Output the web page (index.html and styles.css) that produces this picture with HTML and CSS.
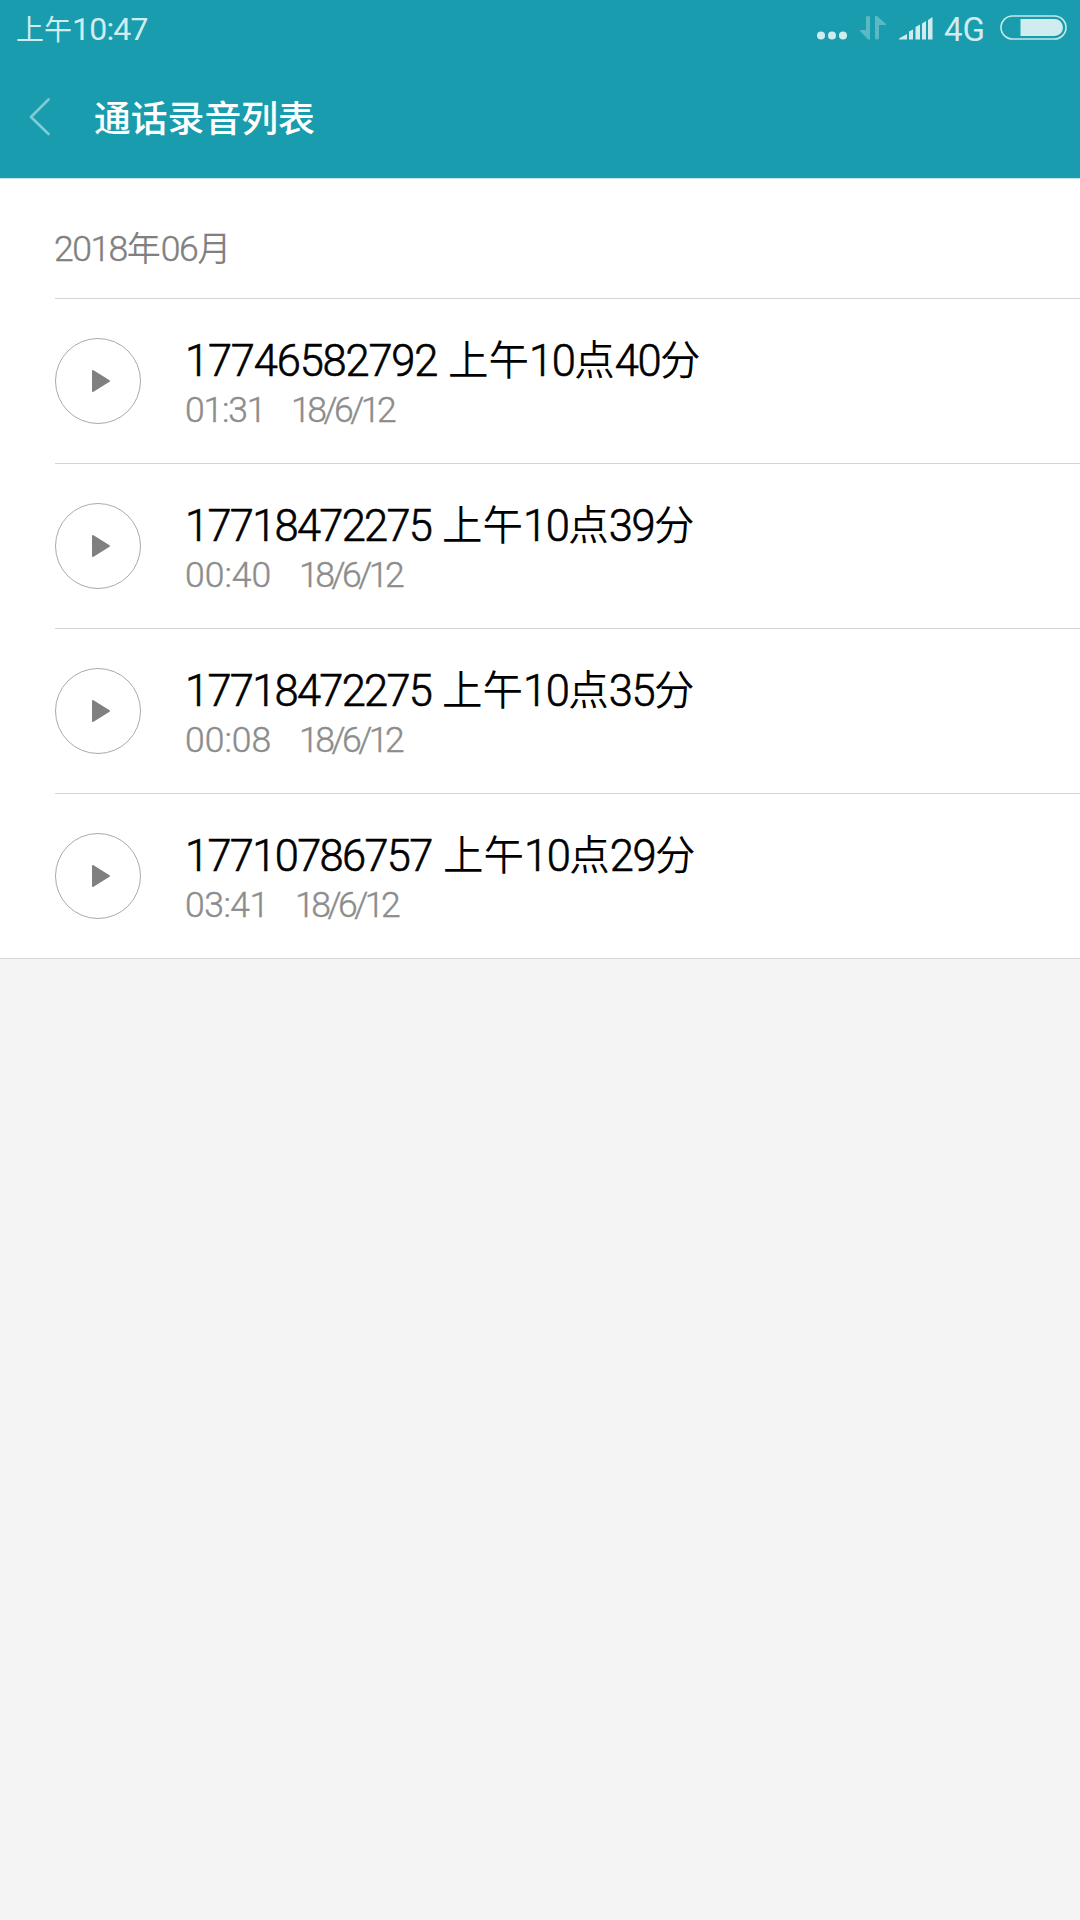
FILE: index.html
```html
<!DOCTYPE html>
<html lang="zh-CN">
<head>
<meta charset="utf-8">
<title>通话录音列表</title>
<link rel="stylesheet" href="styles.css">
</head>
<body>
<header class="header">
  <div class="status">
    <div class="clock"><span class="han">上午</span><span class="num">10:47</span></div>
    <div class="indicators">
      <svg width="128" height="30" viewBox="0 0 128 30" fill="#d0ecef">
        <circle cx="5" cy="21.5" r="4"/><circle cx="16" cy="21.5" r="4"/><circle cx="27" cy="21.5" r="4"/>
        <g fill="#5bb9c3"><path d="M50 3Q50 2 52 2T54 3V25.500H52L44 17V16H50z"/><path d="M59 2H61L70 10V11H63V24Q63 25.500 61 25.500T59 24z"/></g>
        <path d="M83 25.500V24.500L91 20V25.500zM93 25.500V17.500L97 15.500V25.500zM99.500 25.500V13L104 10.500V25.500zM106 25.500V9.500L110 7V25.500zM112 25.500V6L116.500 3V25.500z" stroke="none"/>
      </svg>
      <span class="network">4G</span>
      <svg width="67" height="26" viewBox="0 0 67 26">
        <rect x="1" y="1" width="65" height="23" rx="11.500" fill="none" stroke="#c5e8eb" stroke-width="1.600"/>
        <path d="M20.500 4H54.500A8.500 8.500 0 0 1 54.500 21H20.500z" fill="#d0ecef"/>
      </svg>
    </div>
  </div>
  <div class="toolbar">
    <svg class="back" width="22" height="38" viewBox="0 0 22 38"><path d="M19.500 1.500L2 19L19.500 36" fill="none" stroke="#7fccd3" stroke-width="2.600" stroke-linecap="round" stroke-linejoin="round"/></svg>
    <h1 class="heading">通话录音列表</h1>
  </div>
</header>
<main class="list">
  <h2 class="month"><span class="num">2018</span><span class="han">年</span><span class="num">06</span><span class="han">月</span></h2>
  <article class="record">
    <span class="play"><svg width="20" height="24" viewBox="0 0 20 24"><path d="M2 2L18 12L2 22z" fill="#808080" stroke="#808080" stroke-width="2" stroke-linejoin="round"/></svg></span>
    <div class="info">
      <div class="name"><span class="phone wide">17746582792</span><span class="han">上午</span><span class="num">10</span><span class="han">点</span><span class="num">40</span><span class="han">分</span></div>
      <div class="meta"><span class="length short">01:31</span><span class="date">18/6/12</span></div>
    </div>
  </article>
  <article class="record">
    <span class="play"><svg width="20" height="24" viewBox="0 0 20 24"><path d="M2 2L18 12L2 22z" fill="#808080" stroke="#808080" stroke-width="2" stroke-linejoin="round"/></svg></span>
    <div class="info">
      <div class="name"><span class="phone">17718472275</span><span class="han">上午</span><span class="num">10</span><span class="han">点</span><span class="num">39</span><span class="han">分</span></div>
      <div class="meta"><span class="length">00:40</span><span class="date">18/6/12</span></div>
    </div>
  </article>
  <article class="record">
    <span class="play"><svg width="20" height="24" viewBox="0 0 20 24"><path d="M2 2L18 12L2 22z" fill="#808080" stroke="#808080" stroke-width="2" stroke-linejoin="round"/></svg></span>
    <div class="info">
      <div class="name"><span class="phone">17718472275</span><span class="han">上午</span><span class="num">10</span><span class="han">点</span><span class="num">35</span><span class="han">分</span></div>
      <div class="meta"><span class="length">00:08</span><span class="date">18/6/12</span></div>
    </div>
  </article>
  <article class="record">
    <span class="play"><svg width="20" height="24" viewBox="0 0 20 24"><path d="M2 2L18 12L2 22z" fill="#808080" stroke="#808080" stroke-width="2" stroke-linejoin="round"/></svg></span>
    <div class="info">
      <div class="name"><span class="phone last">17710786757</span><span class="han">上午</span><span class="num">10</span><span class="han">点</span><span class="num">29</span><span class="han">分</span></div>
      <div class="meta"><span class="length medium">03:41</span><span class="date">18/6/12</span></div>
    </div>
  </article>
</main>
</body>
</html>
```
FILE: styles.css
```css
* { box-sizing: border-box; }
body {
  margin: 0;
  min-height: 1920px;
  background: #f4f4f4;
  font-family: Roboto, "Noto Sans CJK SC", sans-serif;
}
svg { display: block; flex: none; }
.han { font-family: "Noto Sans CJK SC", sans-serif; }

.header {
  height: 179px;
  border-bottom: 1px solid #c3e5e9;
  background: #199cad;
  color: #fff;
}
.status {
  display: flex;
  justify-content: space-between;
  height: 58px;
  padding: 0 13px 0 16px;
  color: #d0ecef;
}
.clock {
  display: flex;
  align-items: baseline;
  height: 56px;
  line-height: 56px;
  font-size: 32px;
}
.clock .han { font-size: 28px; }
.clock .num { letter-spacing: -0.8px; }
.indicators { display: flex; align-items: flex-start; padding-top: 14px; }
.network {
  width: 42px;
  margin-right: 14px;
  font-size: 33px;
  line-height: 31px;
}
.indicators svg:last-child { margin-top: 1px; }
.toolbar { display: flex; align-items: center; height: 120px; padding-left: 29px; }
.back { margin-top: -3px; }
.heading {
  margin: -5px 0 0 43px;
  font: 500 36.800px/60px "Noto Sans CJK SC", sans-serif;
}

.list { background: #fff; border-bottom: 1px solid #d6d6d6; }
.month {
  display: flex;
  align-items: baseline;
  height: 119px;
  margin: 0 0 0 54px;
  font-size: 35.500px;
  font-weight: 300;
  line-height: 136px;
  color: #808080;
}
.month .num { letter-spacing: -1.500px; -webkit-text-stroke: 0.4px; }
.month .han { font-size: 34px; font-weight: 350; }
.record {
  display: flex;
  align-items: center;
  height: 165px;
  margin-left: 55px;
  border-top: 1px solid #d4d4d4;
}
.play {
  display: flex;
  flex: none;
  align-items: center;
  justify-content: center;
  width: 86px;
  height: 86px;
  padding-left: 5px;
  border: 1px solid #aaa;
  border-radius: 50%;
}
.info { margin-left: 44px; }
.name {
  display: flex;
  align-items: flex-start;
  height: 52px;
  line-height: 58px;
  font-size: 43.500px;
  font-weight: 300;
  color: #000;
  white-space: nowrap;
}
.name .han { font-size: 40.500px; font-weight: 350; line-height: 50px; }
.name .num { letter-spacing: -1.500px; }
.name .num, .phone { -webkit-text-stroke: 0.6px; }
.phone { width: 257px; letter-spacing: -1.750px; }
.phone.wide { width: 263px; letter-spacing: -1.200px; }
.phone.last { width: 258px; letter-spacing: -1.700px; }
.meta {
  display: flex;
  height: 44px;
  font-size: 35.500px;
  font-weight: 300;
  line-height: 51px;
  color: #8c8c8c;
  -webkit-text-stroke: 0.4px;
}
.length { width: 114px; }
.length.short { width: 106px; letter-spacing: -1.200px; }
.length.medium { width: 110px; letter-spacing: -0.500px; }
.date { letter-spacing: -3.500px; }
```
